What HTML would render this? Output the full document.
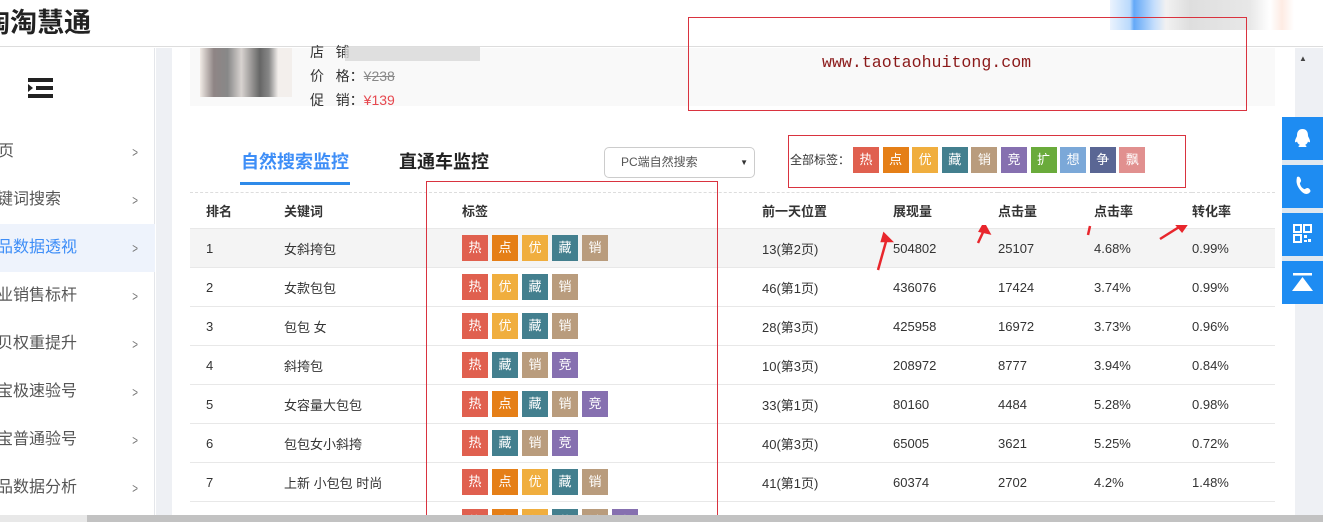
<!DOCTYPE html>
<html style="overflow:hidden;height:522px"><head><meta charset="utf-8"><style>
*{margin:0;padding:0;box-sizing:border-box}
body{width:1323px;height:522px;overflow:hidden;background:#fff;font-family:"Liberation Sans","Noto Sans CJK SC",sans-serif;position:relative;color:#333}
.a{position:absolute}
.hdr{left:0;top:0;width:1323px;height:47px;background:#fff;border-bottom:1px solid #ddd}
.logo{left:-17px;top:1px;font-size:27px;font-weight:bold;color:#222}
.side{left:0;top:48px;width:155px;height:474px;background:#fff;border-right:1px solid #e4e6ea}
.gap{left:156px;top:48px;width:16px;height:474px;background:#eef0f4}
.si{position:absolute;left:0;width:155px;height:48px;font-size:16px;color:#555;line-height:48px}
.si span{position:absolute;right:150px;white-space:nowrap}
.si i{position:absolute;left:131px;top:0;font-style:normal;color:#777;font-size:14px;transform:scaleX(.7)}
.si.act{background:#eef3fc}.si.act span{color:#3e8ef7}
.card{left:190px;top:48px;width:1085px;height:58px;background:#f9f9f9}
.tag{display:inline-block;width:26px;height:26px;line-height:26px;text-align:center;color:#fff;font-size:13px;margin-right:4px}
.c1{background:#e0604f}.c2{background:#e57f17}.c3{background:#f0ae3e}.c4{background:#437f8e}.c5{background:#b99c7d}.c6{background:#8670b0}.c7{background:#6aab3b}.c8{background:#7ba8d8}.c9{background:#5a6694}.c10{background:#e1908f}
table{position:absolute;left:190px;top:192px;width:1085px;border-collapse:collapse;font-size:13px}
td{height:39px;border-bottom:1px solid #e8e8e8;padding:0;color:#333}
tr.h td{height:36px;font-weight:bold;font-size:13px;border-top:1px dashed #ddd}
tr.g td{background:#f4f4f4}
.rb{position:absolute;left:1282px;width:41px;height:43px;background:#1e8cf2}
.box{position:absolute;border:1px solid #d9333f}
.clip{position:absolute;left:0;top:0;width:1323px;height:515px;overflow:hidden}
</style></head><body>
<div class="clip">
<div class="a hdr"></div>
<div class="a logo">陶淘慧通</div>
<div class="a" style="left:1110px;top:0;width:200px;height:30px;background:linear-gradient(90deg,#e6f0fd 0,#a8d0fb 10%,#3d93f5 12%,#b5d5fb 22%,#eee 28%,#d6d6d6 40%,#e2e2e2 70%,#fff 80%,#fde6dc 86%,#fff 92%);opacity:.8"></div>
<div class="a side"></div>
<div class="a gap"></div>
<div class="a" style="left:1295px;top:48px;width:28px;height:474px;background:#eef0f4"></div>
<div class="a" style="left:1299px;top:54px;color:#444;font-size:8px">▲</div>
<svg class="a" style="left:28px;top:78px" width="25" height="20"><rect x="0" y="0" width="25" height="4" fill="#222"/><rect x="8" y="8" width="17" height="4" fill="#222"/><rect x="0" y="16" width="25" height="4" fill="#222"/><path d="M0 6 L5 10 L0 14Z" fill="#222"/></svg>
<div class="si" style="top:128px"><span style="right:141px">页</span><i>&gt;</i></div>
<div class="si" style="top:176px"><span style="right:94px">键词搜索</span><i>&gt;</i></div>
<div class="si act" style="top:224px"><span style="right:78px">品数据透视</span><i>&gt;</i></div>
<div class="si" style="top:272px"><span style="right:78px">业销售标杆</span><i>&gt;</i></div>
<div class="si" style="top:320px"><span style="right:78px">贝权重提升</span><i>&gt;</i></div>
<div class="si" style="top:368px"><span style="right:78px">宝极速验号</span><i>&gt;</i></div>
<div class="si" style="top:416px"><span style="right:78px">宝普通验号</span><i>&gt;</i></div>
<div class="si" style="top:464px"><span style="right:78px">品数据分析</span><i>&gt;</i></div>
<div class="a card"></div>
<div class="a" style="left:200px;top:48px;width:92px;height:49px;background:linear-gradient(90deg,#f1ebe6 0,#8f8585 15%,#888 30%,#d8d3d0 45%,#666 65%,#888 75%,#f3efec 85%)"></div>
<div class="a" style="left:310px;top:40px;font-size:14px;color:#333;line-height:24px">店&nbsp;&nbsp;&nbsp;铺<br>价&nbsp;&nbsp;&nbsp;格：<s style="color:#888">¥238</s><br>促&nbsp;&nbsp;&nbsp;销：<span style="color:#e6484f">¥139</span></div>
<div class="a" style="left:345px;top:47px;width:135px;height:14px;background:#d8d8d8;opacity:.8"></div>
<div class="box" style="left:688px;top:17px;width:559px;height:94px"></div>
<div class="a" style="left:822px;top:53px;font-family:'Liberation Mono',monospace;font-size:16.6px;color:#8b1a1a">www.taotaohuitong.com</div>
<div class="a" style="left:241px;top:148px;font-size:18px;font-weight:bold;color:#3e8ef7">自然搜索监控</div>
<div class="a" style="left:240px;top:182px;width:110px;height:3px;background:#2f8ae9"></div>
<div class="a" style="left:399px;top:148px;font-size:18px;font-weight:bold;color:#222">直通车监控</div>
<div class="a" style="left:604px;top:147px;width:151px;height:31px;border:1px solid #ccc;border-radius:5px;font-size:12px;color:#555;line-height:29px;padding-left:16px">PC端自然搜索<span style="position:absolute;right:6px;font-size:8px;color:#333">▼</span></div>
<div class="box" style="left:788px;top:135px;width:398px;height:53px"></div>
<div class="a" style="left:790px;top:147px;font-size:12px;color:#333;line-height:26px">全部标签：</div>
<div class="a" style="left:853px;top:147px;width:310px;height:26px;font-size:0;white-space:nowrap"><span class="tag c1" style="margin-right:3.6px">热</span><span class="tag c2" style="margin-right:3.6px">点</span><span class="tag c3" style="margin-right:3.6px">优</span><span class="tag c4" style="margin-right:3.6px">藏</span><span class="tag c5" style="margin-right:3.6px">销</span><span class="tag c6" style="margin-right:3.6px">竞</span><span class="tag c7" style="margin-right:3.6px">扩</span><span class="tag c8" style="margin-right:3.6px">想</span><span class="tag c9" style="margin-right:3.6px">争</span><span class="tag c10">飘</span></div>
<table>
<colgroup><col style="width:94px"><col style="width:178px"><col style="width:300px"><col style="width:131px"><col style="width:105px"><col style="width:96px"><col style="width:98px"><col></colgroup>
<tr class="h"><td style="padding-left:16px">排名</td><td>关键词</td><td>标签</td><td>前一天位置</td><td>展现量</td><td>点击量</td><td>点击率</td><td>转化率</td></tr>
<tr class="g"><td style="padding-left:16px">1</td><td>女斜挎包</td><td style="font-size:0"><span class="tag c1">热</span><span class="tag c2">点</span><span class="tag c3">优</span><span class="tag c4">藏</span><span class="tag c5">销</span></td><td>13(第2页)</td><td>504802</td><td>25107</td><td>4.68%</td><td>0.99%</td></tr>
<tr><td style="padding-left:16px">2</td><td>女款包包</td><td style="font-size:0"><span class="tag c1">热</span><span class="tag c3">优</span><span class="tag c4">藏</span><span class="tag c5">销</span></td><td>46(第1页)</td><td>436076</td><td>17424</td><td>3.74%</td><td>0.99%</td></tr>
<tr><td style="padding-left:16px">3</td><td>包包 女</td><td style="font-size:0"><span class="tag c1">热</span><span class="tag c3">优</span><span class="tag c4">藏</span><span class="tag c5">销</span></td><td>28(第3页)</td><td>425958</td><td>16972</td><td>3.73%</td><td>0.96%</td></tr>
<tr><td style="padding-left:16px">4</td><td>斜挎包</td><td style="font-size:0"><span class="tag c1">热</span><span class="tag c4">藏</span><span class="tag c5">销</span><span class="tag c6">竞</span></td><td>10(第3页)</td><td>208972</td><td>8777</td><td>3.94%</td><td>0.84%</td></tr>
<tr><td style="padding-left:16px">5</td><td>女容量大包包</td><td style="font-size:0"><span class="tag c1">热</span><span class="tag c2">点</span><span class="tag c4">藏</span><span class="tag c5">销</span><span class="tag c6">竞</span></td><td>33(第1页)</td><td>80160</td><td>4484</td><td>5.28%</td><td>0.98%</td></tr>
<tr><td style="padding-left:16px">6</td><td>包包女小斜挎</td><td style="font-size:0"><span class="tag c1">热</span><span class="tag c4">藏</span><span class="tag c5">销</span><span class="tag c6">竞</span></td><td>40(第3页)</td><td>65005</td><td>3621</td><td>5.25%</td><td>0.72%</td></tr>
<tr><td style="padding-left:16px">7</td><td>上新 小包包 时尚</td><td style="font-size:0"><span class="tag c1">热</span><span class="tag c2">点</span><span class="tag c3">优</span><span class="tag c4">藏</span><span class="tag c5">销</span></td><td>41(第1页)</td><td>60374</td><td>2702</td><td>4.2%</td><td>1.48%</td></tr>
<tr><td></td><td></td><td style="font-size:0;vertical-align:top;padding-top:7px"><span class="tag c1">热</span><span class="tag c2">点</span><span class="tag c3">优</span><span class="tag c4">藏</span><span class="tag c5">销</span><span class="tag c6">竞</span></td><td></td><td></td><td></td><td></td><td></td></tr>
</table>
<div class="box" style="left:426px;top:181px;width:292px;height:350px"></div>
<svg class="a" style="left:860px;top:225px" width="340" height="50"><g fill="#e8262c" stroke="#e8262c" stroke-width="2.5"><line x1="18" y1="45" x2="27" y2="13"/><path d="M24 9 L31 16 L22 16Z"/><line x1="118" y1="18" x2="125" y2="3"/><path d="M124 -1 L129 8 L120 6Z"/><line x1="228" y1="10" x2="230" y2="1"/><line x1="300" y1="14" x2="324" y2="-1"/><path d="M329 -4 L322 6 L316 -1Z"/></g></svg>
<div class="rb" style="top:117px"><svg width="41" height="43"><path d="M20.5 12c-4 0-5.5 3-5.5 6.5 0 1.5-2 3.5-2 6 0 1 1 1 2 0 .5 2 2 3 3 3.5-1.5.7-2 1.5-1 2h7c1-.5.5-1.3-1-2 1-.5 2.5-1.5 3-3.5 1 1 2 1 2 0 0-2.5-2-4.5-2-6 0-3.5-1.5-6.5-5.5-6.5z" fill="#fff"/></svg></div>
<div class="rb" style="top:165px"><svg width="41" height="43"><path d="M15 12c2-1 3 0 4 3 .5 2-1.5 2.5-1 4 .8 2.5 2 4 4 5 1.3.5 2-1 3.5-1s3 2 3 3-2 3-4 3c-4 0-10-7-10-13 0-2 .5-3.5.5-4z" fill="#fff"/></svg></div>
<div class="rb" style="top:213px"><svg width="41" height="43"><g fill="none" stroke="#fff" stroke-width="2"><rect x="12" y="12" width="7" height="7"/><rect x="22" y="12" width="7" height="7"/><rect x="12" y="22" width="7" height="7"/></g><g fill="#fff"><rect x="22" y="22" width="3" height="3"/><rect x="26" y="26" width="3" height="3"/><rect x="22" y="27" width="3" height="2"/></g></svg></div>
<div class="rb" style="top:261px"><svg width="41" height="43"><rect x="11" y="12" width="19" height="2.5" fill="#fff"/><path d="M20.5 16 L31 30 L10 30Z" fill="#fff"/></svg></div>
<div class="a" style="left:1282px;top:160px;width:41px;height:5px;background:#e0e8f0"></div>
<div class="a" style="left:1282px;top:208px;width:41px;height:5px;background:#e0e8f0"></div>
<div class="a" style="left:1282px;top:256px;width:41px;height:5px;background:#e0e8f0"></div>
</div>
<div class="a" style="left:0;top:515px;width:1323px;height:7px;background:#e8e8e8"></div>
<div class="a" style="left:87px;top:515px;width:1236px;height:7px;background:#c2c2c2"></div>
</body></html>
